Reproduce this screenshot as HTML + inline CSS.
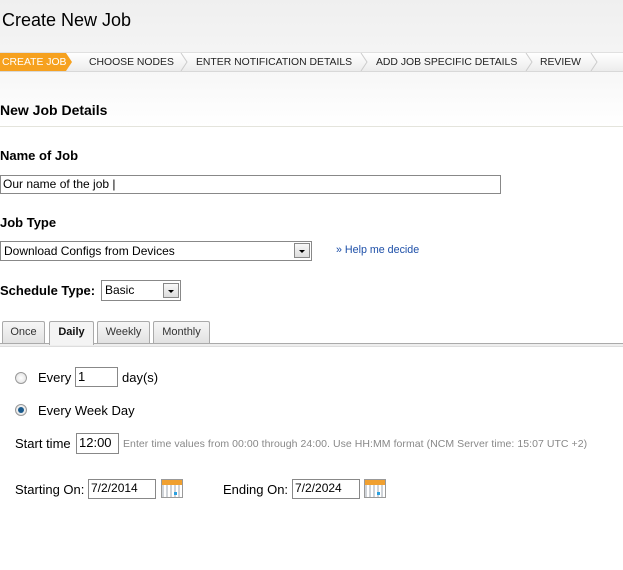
<!DOCTYPE html>
<html><head><style>
*{margin:0;padding:0;box-sizing:border-box}
body{width:623px;height:570px;background:#fff;font-family:"Liberation Sans",Arial,sans-serif;font-size:12px;color:#000;position:relative;overflow:hidden}
.a{position:absolute;white-space:nowrap}
.hdr{left:0;top:0;width:623px;height:127px;background:linear-gradient(#efefef,#f4f4f4 40%,#fbfbfb 80%,#fff);border-bottom:1px solid #e4e4dc}
.bc{left:0;top:52px;width:623px;height:20px;background:linear-gradient(#fff,#ececec);border-top:1px solid #e0e0e0;border-bottom:1px solid #d8d8d8;font-size:10.4px;color:#222}
.bc span{position:absolute;top:4px}
.sep{position:absolute;top:0;width:8px;height:18px}
.inp{position:absolute;border:1px solid #888;background:#fff;font-size:12px;padding:1px 2px;line-height:15px}
.sel{position:absolute;border:1px solid #888;background:#fff;font-size:12px;padding:2px 3px}
.arr{position:absolute;right:1px;top:1px;width:16px;height:15px;background:linear-gradient(#f8f8f8,#ddd);border:1px solid #888}
.arr:after{content:"";position:absolute;left:4px;top:6px;border-left:3px solid transparent;border-right:3px solid transparent;border-top:3px solid #000}
.tab{position:absolute;top:321px;height:22px;border:1px solid #aaa;border-bottom:none;background:linear-gradient(#f6f6f6,#e2e2e2);font-size:11px;color:#333;text-align:center;line-height:20px;border-radius:2px 2px 0 0}
.cal{position:absolute;width:22px;height:19px;border:1px solid #999;background:repeating-linear-gradient(90deg,#cfd3d8 0 2px,#fff 2px 4px);}
.cal:before{content:"";position:absolute;left:0;top:0;right:0;height:5px;background:#f0a030}
.cal:after{content:"";position:absolute;left:12px;top:12px;width:3px;height:3px;background:#2aa0e0}
.rad{position:absolute;width:12px;height:12px;border-radius:50%;border:1px solid #999;background:radial-gradient(#fff,#ddd)}
</style></head><body>
<div class="a hdr"></div>
<div class="a" style="left:2px;top:10px;font-size:18px">Create New Job</div>
<div class="a bc">
<div style="position:absolute;left:0;top:0;width:66px;height:18px;background:#f6a11f"></div>
<div style="position:absolute;left:66px;top:0;border-top:9px solid transparent;border-bottom:9px solid transparent;border-left:6px solid #f6a11f"></div>
<svg class="sep" style="left:180px" viewBox="0 0 8 18"><path d="M1 0 L7 9 L1 18" fill="none" stroke="#ccc"/></svg>
<svg class="sep" style="left:360px" viewBox="0 0 8 18"><path d="M1 0 L7 9 L1 18" fill="none" stroke="#ccc"/></svg>
<svg class="sep" style="left:525px" viewBox="0 0 8 18"><path d="M1 0 L7 9 L1 18" fill="none" stroke="#ccc"/></svg>
<svg class="sep" style="left:590px" viewBox="0 0 8 18"><path d="M1 0 L7 9 L1 18" fill="none" stroke="#ccc"/></svg>
<span style="left:2px;color:#fff">CREATE JOB</span>
<span style="left:89px">CHOOSE NODES</span>
<span style="left:196px">ENTER NOTIFICATION DETAILS</span>
<span style="left:376px">ADD JOB SPECIFIC DETAILS</span>
<span style="left:540px">REVIEW</span>
</div>
<div class="a" style="left:0;top:102px;font-size:14px;font-weight:bold">New Job Details</div>
<div class="a" style="left:0;top:148px;font-size:13px;font-weight:bold">Name of Job</div>
<div class="inp" style="left:0;top:175px;width:501px;height:19px">Our name of the job |</div>
<div class="a" style="left:0;top:215px;font-size:13px;font-weight:bold">Job Type</div>
<div class="sel" style="left:0;top:241px;width:312px;height:20px">Download Configs from Devices<div class="arr"></div></div>
<div class="a" style="left:336px;top:244px;font-size:10.7px;color:#1d4fa8">» Help me decide</div>
<div class="a" style="left:0;top:283px;font-size:13px;font-weight:bold">Schedule Type:</div>
<div class="sel" style="left:101px;top:280px;width:80px;height:21px">Basic<div class="arr" style="top:2px"></div></div>
<div class="a" style="left:0;top:343px;width:623px;height:4px;border-top:1px solid #aaa;border-bottom:1px solid #ddd;background:#eee"></div>
<div class="tab" style="left:2px;width:43px">Once</div>
<div class="tab" style="left:49px;width:45px;height:24px;background:#f4f4f4;font-weight:bold;color:#111">Daily</div>
<div class="tab" style="left:97px;width:53px">Weekly</div>
<div class="tab" style="left:153px;width:57px">Monthly</div>
<div class="rad" style="left:15px;top:372px"></div>
<div class="a" style="left:38px;top:370px;font-size:13px">Every</div>
<div class="inp" style="left:75px;top:367px;width:43px;height:20px;font-size:13px">1</div>
<div class="a" style="left:122px;top:370px;font-size:13px">day(s)</div>
<div class="rad" style="left:15px;top:404px"><div style="position:absolute;left:2px;top:2px;width:6px;height:6px;border-radius:50%;background:#1b5a8c"></div></div>
<div class="a" style="left:38px;top:403px;font-size:13px">Every Week Day</div>
<div class="a" style="left:15px;top:436px;font-size:13px">Start time</div>
<div class="inp" style="left:76px;top:433px;width:43px;height:21px;font-size:13px">12:00</div>
<div class="a" style="left:123px;top:438px;font-size:10.5px;color:#888;letter-spacing:0.05px">Enter time values from 00:00 through 24:00. Use HH:MM format (NCM Server time: 15:07 UTC +2)</div>
<div class="a" style="left:15px;top:482px;font-size:13px">Starting On:</div>
<div class="inp" style="left:88px;top:479px;width:68px;height:20px">7/2/2014</div>
<div class="cal" style="left:161px;top:479px"></div>
<div class="a" style="left:223px;top:482px;font-size:13px">Ending On:</div>
<div class="inp" style="left:292px;top:479px;width:68px;height:20px">7/2/2024</div>
<div class="cal" style="left:364px;top:479px"></div>
</body></html>
